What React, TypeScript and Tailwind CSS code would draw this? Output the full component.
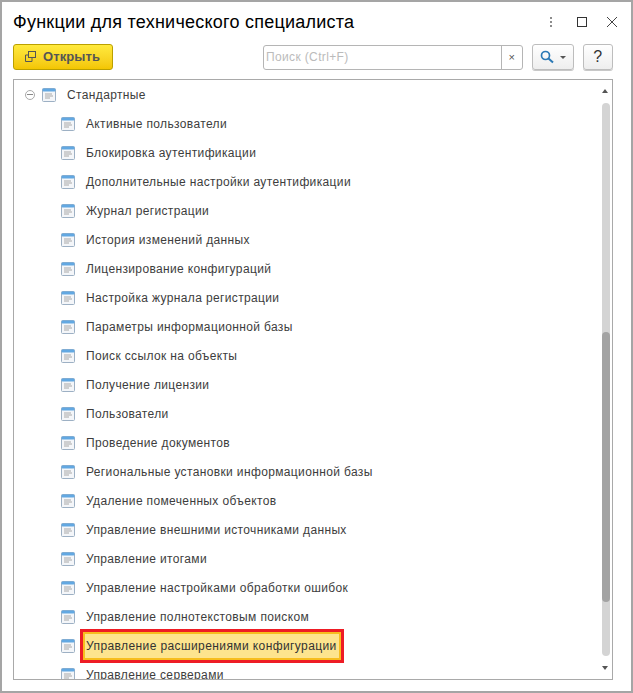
const items = [
  "Активные пользователи",
  "Блокировка аутентификации",
  "Дополнительные настройки аутентификации",
  "Журнал регистрации",
  "История изменений данных",
  "Лицензирование конфигураций",
  "Настройка журнала регистрации",
  "Параметры информационной базы",
  "Поиск ссылок на объекты",
  "Получение лицензии",
  "Пользователи",
  "Проведение документов",
  "Региональные установки информационной базы",
  "Удаление помеченных объектов",
  "Управление внешними источниками данных",
  "Управление итогами",
  "Управление настройками обработки ошибок",
  "Управление полнотекстовым поиском",
  "Управление расширениями конфигурации",
  "Управление серверами",
];

function DocIcon() {
  return (
    <svg width="14" height="14" viewBox="0 0 14 14" className="shrink-0">
      <rect x="0.5" y="0.5" width="13" height="13" rx="1" fill="#f4f6f9" stroke="#9db0c4" />
      <rect x="0.5" y="0.5" width="13" height="3" rx="1" fill="#62a8e2" />
      <path d="M3 6h7M3 8h8M3 10h5" stroke="#a8a8a8" strokeWidth="1" />
    </svg>
  );
}

function Row({ text }: { text: string }) {
  const selected = text === "Управление расширениями конфигурации";
  return (
    <div className="flex h-[29px] shrink-0 items-center pl-[47px]">
      <DocIcon />
      {selected ? (
        <div className="ml-[5px] flex h-[34px] w-[264px] shrink-0 items-center border-[3px] border-[#ee1c25]">
          <div className="flex h-[28px] w-full items-center border-2 border-[#f7bd1e] bg-[#fde48e] pl-[1px] tracking-[0.4px] text-[#333]">
            {text}
          </div>
        </div>
      ) : (
        <span className="ml-[11px] text-[#3d3d3d]">{text}</span>
      )}
    </div>
  );
}

export default function App() {
  return (
    <div className="flex h-[693px] w-[633px] flex-col overflow-hidden border-2 border-[#a5a5a5] bg-white font-['Liberation_Sans',Arial,sans-serif] text-[12px] tracking-[0.36px]">
      <div className="flex h-[42px] shrink-0 items-center pb-[3px] pl-[11px] pr-[14px]">
        <h1 className="flex-1 text-[18px] font-normal leading-none tracking-[0.24px] text-black">
          Функции для технического специалиста
        </h1>
        <div className="mr-[25px] flex flex-col gap-[2px]">
          <span className="h-[2px] w-[2px] rounded-full bg-[#666]" />
          <span className="h-[2px] w-[2px] rounded-full bg-[#666]" />
          <span className="h-[2px] w-[2px] rounded-full bg-[#666]" />
        </div>
        <span className="mr-[20px] h-[10px] w-[10px] border border-[#333]" />
        <svg width="10" height="10" viewBox="0 0 10 10">
          <path d="M0 0l10 10M10 0L0 10" stroke="#444" strokeWidth="1" />
        </svg>
      </div>

      <div className="flex h-[26px] shrink-0 items-center pl-[11px] pr-[18px]">
        <button className="flex h-[26px] w-[100px] items-center rounded-[3px] border border-[#bba000] bg-gradient-to-b from-[#ffea3c] to-[#f3c600] pl-[10px] text-[13px] font-bold tracking-[0.1px] text-[#555]">
          <svg width="13" height="12" viewBox="0 0 13 12" className="mr-[6px]">
            <rect x="4.5" y="0.5" width="7" height="6" fill="none" stroke="#555" />
            <path d="M4 4H1.5V10.5H8V7" fill="none" stroke="#555" />
          </svg>
          <span>Открыть</span>
        </button>
        <div className="ml-[150px] flex h-[25px] w-[260px] items-center rounded-[3px] border border-[#b5b5b5]">
          <span className="flex-1 pl-[2px] text-[#bbb]">Поиск (Ctrl+F)</span>
          <span className="flex h-full w-[21px] items-center justify-center border-l border-[#b5b5b5] text-[11px] text-[#555]">
            ×
          </span>
        </div>
        <button className="ml-[9px] flex h-[26px] w-[42px] items-center rounded-[3px] border border-[#bdbdbd] bg-gradient-to-b from-white to-[#eeeeee] pl-[7px] shadow-[0_1px_0_#c8c8c8]">
          <svg width="14" height="14" viewBox="0 0 14 14">
            <circle cx="5.5" cy="5.5" r="4" fill="none" stroke="#2b79b5" strokeWidth="1.7" />
            <path d="M8.5 8.5l4.5 4" stroke="#2b79b5" strokeWidth="2" />
          </svg>
          <span className="ml-[6px] h-0 w-0 border-x-[3px] border-t-[3px] border-x-transparent border-t-[#555]" />
        </button>
        <button className="ml-[9px] flex h-[26px] w-[30px] items-center justify-center rounded-[3px] border border-[#bdbdbd] bg-gradient-to-b from-white to-[#eeeeee] text-[16px] text-[#333] shadow-[0_1px_0_#c8c8c8]">
          ?
        </button>
      </div>

      <div className="mt-[9px] ml-[11px] flex h-[601px] w-[600px] shrink-0 flex-col">
        <div className="relative h-full overflow-hidden border border-[#a9a9a9]">
          <div className="flex flex-col">
            <div className="flex h-[29px] shrink-0 items-center pl-[11px]">
              <span className="mr-[7px] flex h-[10px] w-[10px] items-center justify-center rounded-full border border-[#aaa]">
                <span className="h-px w-[6px] bg-[#888]" />
              </span>
              <DocIcon />
              <span className="ml-[11px] text-[#3d3d3d]">Стандартные</span>
            </div>
            {items.map((t) => (
              <Row key={t} text={t} />
            ))}
          </div>
          <span className="absolute right-[4px] top-[9px] h-0 w-0 border-x-[3px] border-b-[4px] border-x-transparent border-b-[#555]" />
          <span className="absolute right-[4px] bottom-[9px] h-0 w-0 border-x-[3px] border-t-[4px] border-x-transparent border-t-[#555]" />
          <div className="absolute right-[2px] top-[23px] h-[553px] w-[8px] overflow-hidden rounded-[4px] bg-[#d4d4d4]">
            <div className="mt-[229px] h-[270px] rounded-[4px] bg-[#a3a3a3]" />
          </div>
        </div>
      </div>
    </div>
  );
}
